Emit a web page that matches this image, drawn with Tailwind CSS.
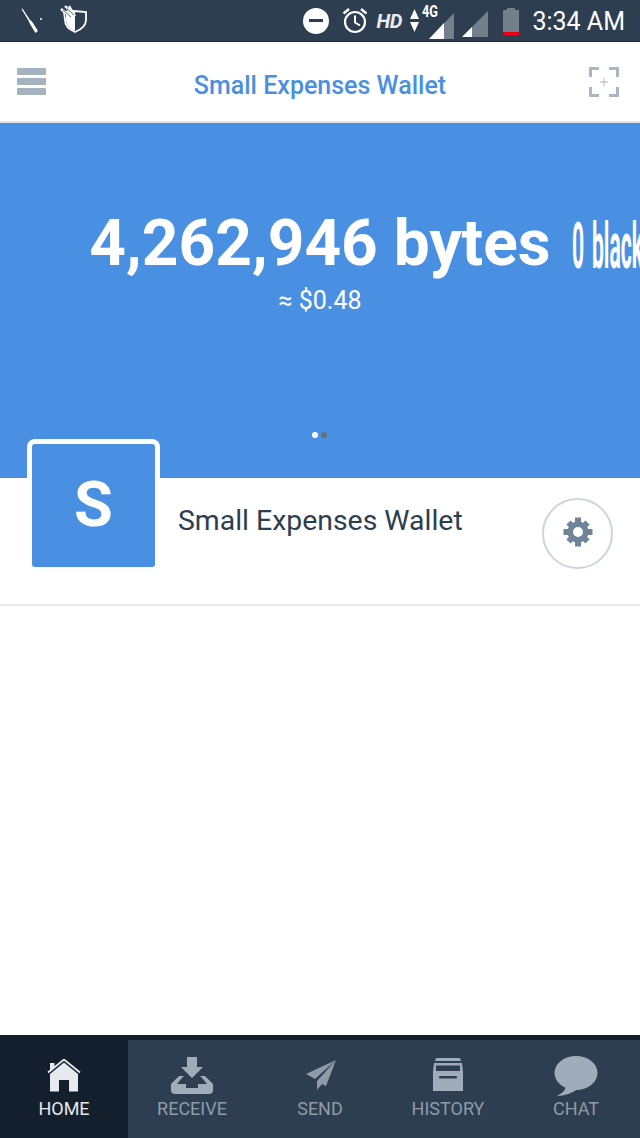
<!DOCTYPE html>
<html lang="en">
<head>
    <meta charset="UTF-8">
    <meta name="viewport" content="width=device-width, initial-scale=1.0">
    <title>Small Expenses Wallet</title>
    <script src="https://cdn.jsdelivr.net/npm/@tailwindcss/browser@4"></script>
</head>
<body class="bg-white font-['Roboto',sans-serif]">
<div class="w-[640px] h-[1138px] flex flex-col overflow-hidden">
    <!-- status bar -->
    <div class="h-[42px] bg-[#2c3e50] border-b border-[#1c2a38] flex items-center text-white shrink-0">
        <svg class="ml-[20px] mt-[1px]" width="24" height="26" viewBox="0 0 24 26" fill="#fff">
            <path d="M1.500 1 L2.500 .5 L10 12 L12 13.500 L18 23 L15.500 25 L10 16 L9 13.500 Z"/>
            <circle cx="21" cy="11" r="1"/>
        </svg>
        <svg class="ml-[16px] mt-[-3px]" width="28" height="28" viewBox="0 0 28 28">
            <path d="M4 7 L14 6 L26 7 V15 C26 21 20 25 15 27 C10 25 5 21 5 15 Z" fill="none" stroke="#fff" stroke-width="1.800"/>
            <path d="M15 6 V26 C10 24 6 20 6 15 V8 Z" fill="#fff"/>
            <path d="M1 4 L11 12 M5 1 L14 10 M9 1 L15 11" stroke="#fff" stroke-width="2.400"/>
            <path d="M3 5 L11 12 M6.500 3 L14 10" stroke="#2c3e50" stroke-width=".8"/>
        </svg>
        <div class="ml-auto flex items-center">
            <div class="w-[26px] h-[26px] rounded-full bg-white flex items-center justify-center"><div class="w-[14px] h-[3px] bg-[#2c3e50]"></div></div>
            <svg class="ml-[13px]" width="26" height="27" viewBox="0 0 26 27" fill="none" stroke="#fff">
                <circle cx="13" cy="15" r="10" stroke-width="2.200"/>
                <path d="M13 8.500 V15.500 L18 18.500" stroke-width="2"/>
                <path d="M1.500 6.500 L7 2 M24.500 6.500 L19 2" stroke-width="2.400"/>
            </svg>
            <span class="ml-[8px] w-[27px] text-[20px] leading-none font-bold italic text-white/90 tracking-[-0.4px]">HD</span>
            <svg class="ml-[7px]" width="9" height="23" viewBox="0 0 9 23" fill="#fff"><path d="M4.500 0 L9 10 H0 Z M0 13 H9 L4.500 23 Z"/></svg>
            <div class="relative w-[26px] h-[28px] ml-[10px]">
                <svg class="absolute left-0 top-[6px]" width="25" height="26" viewBox="0 0 25 26"><path d="M25 0 V26 H0 Z" fill="#73808c"/><path d="M15 10 V26 H0 Z" fill="#fff"/></svg>
                <span class="absolute left-[-7px] top-[-4px] text-[17px] font-bold leading-none text-white scale-x-75 origin-left">4G</span>
            </div>
            <svg class="ml-[7px] mt-[7px]" width="26" height="26" viewBox="0 0 26 26"><path d="M26 0 V26 H0 Z" fill="#73808c"/><path d="M10 16 V26 H0 Z" fill="#fff"/></svg>
            <svg class="ml-[15px] mt-[1px]" width="16" height="27" viewBox="0 0 16 27"><path d="M4 0 H12 V2 H16 V27 H0 V2 H4 Z" fill="#73808c"/><rect x="0" y="24" width="16" height="3" fill="#f0000f"/></svg>
            <span class="ml-[13px] mr-[15px] mt-[2px] text-[25px] leading-none text-white">3:34 AM</span>
        </div>
    </div>

    <!-- header -->
    <div class="h-[81px] bg-white border-b-2 border-[#e3e6e9] flex items-center shrink-0">
        <div class="ml-[17px] flex flex-col gap-[3px]">
            <div class="w-[29px] h-[7px] bg-[#a5b2c1] rounded-[1px]"></div>
            <div class="w-[29px] h-[7px] bg-[#a5b2c1] rounded-[1px]"></div>
            <div class="w-[29px] h-[7px] bg-[#a5b2c1] rounded-[1px]"></div>
        </div>
        <div class="flex-1 text-center text-[25px] font-medium text-[#4a90e2] ml-[5px] mt-[9px]">Small Expenses Wallet</div>
        <svg class="mr-[21px]" width="30" height="30" viewBox="0 0 30 30" fill="none" stroke="#a9b6c4" stroke-width="3">
            <path d="M1.500 10 V1.500 H10 M20 1.500 H28.500 V10 M28.500 20 V28.500 H20 M10 28.500 H1.500 V20"/>
            <path d="M15 11 V19 M11 15 H19" stroke-width="1"/>
        </svg>
    </div>

    <!-- balance slider -->
    <div class="h-[355px] bg-[#4a90e2] relative overflow-hidden shrink-0">
        <div class="mt-[83px] text-center text-white">
            <div class="text-[64px] leading-[75px] font-bold">4,262,946 bytes</div>
            <div class="text-[25px] leading-[28px] mt-[6px]">≈ $0.48</div>
        </div>
        <div class="absolute left-[572px] top-[88px] text-[65px] leading-[70px] font-bold text-white whitespace-nowrap origin-left scale-x-[0.325] [word-spacing:8px]">0 blackbytes</div>
        <div class="absolute left-[312px] top-[309px] flex gap-[3px]">
            <div class="w-[6px] h-[6px] rounded-full bg-white"></div>
            <div class="w-[6px] h-[6px] rounded-full bg-[#6b6f76]"></div>
        </div>
    </div>

    <!-- wallet row -->
    <div class="h-[128px] bg-white border-b-2 border-[#e8e9ea] flex items-start relative shrink-0">
        <div class="absolute left-[27px] top-[-39px] w-[133px] h-[133px] bg-white rounded-t-[8px] pl-[5px] pt-[5px]">
            <div class="w-[123px] h-[123px] bg-[#4a90e2] rounded-[3px] flex items-center justify-center text-white text-[63px] font-bold leading-none pb-[2px]">S</div>
        </div>
        <div class="ml-[178px] mt-[26px] text-[28.400px] leading-[34px] text-[#2c3e50]">Small Expenses Wallet</div>
        <div class="ml-auto mr-[27px] mt-[20px] w-[71px] h-[71px] rounded-full border-2 border-[#ccd5dd] flex items-center justify-center">
            <svg class="mt-[-4px]" width="30" height="30" viewBox="0 0 30 30" fill="#708499">
                <circle cx="15" cy="15" r="10.500"/>
                <g stroke="#708499" stroke-width="6">
                    <path d="M15 0.500 V29.500 M0.500 15 H29.500 M5.500 5.500 L24.500 24.500 M24.500 5.500 L5.500 24.500"/>
                </g>
                <circle cx="15" cy="15" r="5" fill="#fff"/>
            </svg>
        </div>
    </div>

    <div class="flex-1 bg-white"></div>

    <!-- bottom nav -->
    <div class="h-[103px] bg-[#2c3e50] border-t-[5px] border-[#141f2e] flex shrink-0">
        <div class="w-[128px] bg-[#141f2e] mt-[-5px] flex flex-col items-center">
            <svg class="mt-[24px]" width="34" height="34" viewBox="0 0 34 34" fill="#e6e9ed">
                <path d="M1 13.500 L17 0.500 L33 13.500" fill="none" stroke="#e6e9ed" stroke-width="1.800"/>
                <path d="M3 4 H7.500 V9 L3 13 Z"/>
                <path d="M3 15 L17 3.500 L31 15 V32.500 H22 V21 H12 V32.500 H3 Z"/>
            </svg>
            <span class="mt-[5px] text-[18px] leading-[21px] text-[#e6e9ed]">HOME</span>
        </div>
        <div class="w-[128px] flex flex-col items-center">
            <svg class="mt-[17px]" width="44" height="37" viewBox="0 0 44 37" fill="#a0acb9">
                <path d="M17 0 H27 V10 H33 L22 21 L11 10 H17 Z"/>
                <path d="M9 19 H14 L11 22 H22 H33 L30 19 H35 L43 27 V33 Q43 37 39 37 H5 Q1 37 1 33 V27 Z M7 27 L12 27 H16 V31 H28 V27 H37 L33 22 H11 Z"/>
            </svg>
            <span class="mt-[4px] text-[18px] leading-[21px] text-[#8f9ba8]">RECEIVE</span>
        </div>
        <div class="w-[128px] flex flex-col items-center">
            <svg class="mt-[20px] ml-[1px]" width="30" height="30" viewBox="0 0 30 30" fill="#8f9ba8">
                <path d="M30 0 L0 14 L9 19 Z"/>
                <path d="M30 0 L11 21 L11 30 L16 24 L20 26 Z"/>
            </svg>
            <span class="mt-[8px] text-[18px] leading-[21px] text-[#8f9ba8]">SEND</span>
        </div>
        <div class="w-[128px] flex flex-col items-center">
            <svg class="mt-[18px]" width="30" height="33" viewBox="0 0 30 33" fill="#a0acb9">
                <path d="M3 0 H27 L28 3 H2 Z"/>
                <path d="M1 5 H29 L30 14 V33 H0 V14 Z"/>
                <rect x="3" y="7.500" width="24" height="5.500" fill="#2c3e50"/>
                <rect x="6" y="18" width="18" height="2.500" rx="1" fill="#2c3e50"/>
            </svg>
            <span class="mt-[7px] text-[18px] leading-[21px] text-[#8f9ba8]">HISTORY</span>
        </div>
        <div class="w-[128px] flex flex-col items-center">
            <svg class="mt-[16px]" width="44" height="40" viewBox="0 0 44 40" fill="#a0acb9">
                <ellipse cx="22" cy="17" rx="21.500" ry="17"/>
                <path d="M12 28 Q13 35 3 40 Q14 40 24 33 Z"/>
            </svg>
            <span class="mt-[2px] text-[18px] leading-[21px] text-[#8f9ba8]">CHAT</span>
        </div>
    </div>
</div>
</body>
</html>
